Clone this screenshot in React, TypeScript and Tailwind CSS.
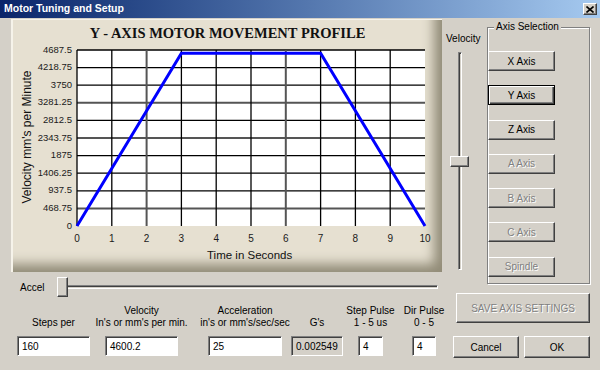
import React from "react";

const RAISED =
  "bg-[#d4d0c8] border border-t-white border-l-white border-r-[#404040] border-b-[#404040] shadow-[inset_-1px_-1px_#808080]";
const SUNKEN =
  "border border-t-[#808080] border-l-[#808080] border-r-white border-b-white shadow-[inset_1px_1px_#404040]";

const yLabels = [
  "0",
  "468.75",
  "937.5",
  "1406.25",
  "1875",
  "2343.75",
  "2812.5",
  "3281.25",
  "3750",
  "4218.75",
  "4687.5",
];

// plot box inside the svg
const PX = 64;
const PY = 2;
const PW = 348;
const PH = 176;

function Chart() {
  const col = PW / 10;
  const row = PH / 10;
  const top = PY + PH - (PH * 4600.2) / 4687.5;
  const grayRows = [1, 5, 7];
  const grayCols = [2, 6];
  return (
    <svg width={431} height={223} className="block overflow-visible">
      <rect x={PX} y={PY} width={PW} height={PH} fill="#ffffff" />
      {Array.from({ length: 10 }, (_, i) => i + 1).map((i) => {
        const y = PY + PH - row * i;
        const gray = grayRows.includes(i);
        return (
          <line
            key={"h" + i}
            x1={PX}
            x2={PX + PW}
            y1={y}
            y2={y}
            stroke={gray ? "#555" : "#000"}
            strokeWidth={gray ? 2 : 1.3}
          />
        );
      })}
      {Array.from({ length: 10 }, (_, i) => i).map((i) => {
        const x = PX + col * i;
        const gray = grayCols.includes(i);
        return (
          <line
            key={"v" + i}
            x1={x}
            x2={x}
            y1={PY}
            y2={PY + PH}
            stroke={gray ? "#555" : "#000"}
            strokeWidth={gray ? 2 : 1.3}
          />
        );
      })}
      <polyline
        points={`${PX},${PY + PH} ${PX + col * 3},${top} ${PX + col * 7},${top} ${PX + PW},${PY + PH}`}
        fill="none"
        stroke="#0000ff"
        strokeWidth={3}
      />
      {yLabels.map((l, i) => (
        <text
          key={l}
          x={59}
          y={PY + PH - row * i}
          textAnchor="end"
          dominantBaseline="middle"
          fontSize={9.5}
          fill="#1a1a1a"
        >
          {l}
        </text>
      ))}
      {Array.from({ length: 11 }, (_, i) => i).map((i) => (
        <text
          key={"x" + i}
          x={PX + col * i}
          y={191}
          textAnchor="middle"
          dominantBaseline="middle"
          fontSize={10}
          fill="#1a1a1a"
        >
          {i}
        </text>
      ))}
      <text x={194} y={208} dominantBaseline="middle" fontSize={11.5} fill="#111">
        Time in Seconds
      </text>
      <text
        x={15}
        y={89}
        textAnchor="middle"
        dominantBaseline="middle"
        fontSize={12}
        fill="#111"
        transform="rotate(-90 15 89)"
      >
        Velocity mm's per Minute
      </text>
    </svg>
  );
}

function Button({
  label,
  disabled,
  focused,
  className = "",
}: {
  label: string;
  disabled?: boolean;
  focused?: boolean;
  className?: string;
}) {
  const frame = focused
    ? "bg-[#d4d0c8] border border-black shadow-[inset_1px_1px_white,inset_-1px_-1px_#404040,inset_-2px_-2px_#808080]"
    : RAISED;
  return (
    <div
      className={`${frame} flex items-center justify-center text-[10px] ${
        disabled ? "text-[#808080] [text-shadow:1px_1px_0_#fff]" : "text-black"
      } ${className}`}
    >
      {label}
    </div>
  );
}

function Field({
  label,
  value,
  width,
  ml,
  disabled,
}: {
  label: string[];
  value: string;
  width: string;
  ml: string;
  disabled?: boolean;
}) {
  return (
    <div className={`flex flex-col items-center ${width} ${ml}`}>
      <div className="h-[24px] flex flex-col justify-end items-center text-[10px] leading-[12px] whitespace-nowrap text-black">
        {label.map((l) => (
          <span key={l}>{l}</span>
        ))}
      </div>
      <div
        className={`${SUNKEN} mt-[7px] h-[20px] w-full flex items-center pl-[4px] text-[10px] whitespace-nowrap ${
          disabled ? "bg-[#d4d0c8]" : "bg-white"
        }`}
      >
        {value}
      </div>
    </div>
  );
}

export default function App() {
  return (
    <div className="w-[600px] h-[370px] bg-[#d4d0c8] flex flex-col overflow-hidden font-['Liberation_Sans',Arial,sans-serif]">
      {/* Title bar */}
      <div className="h-[18px] flex items-center justify-between pl-[4px] pr-[3px] bg-linear-to-r from-[#0a246a] to-[#a6caf0]">
        <span className="text-white font-bold text-[10.5px]">Motor Tuning and Setup</span>
        <div className={`${RAISED} w-[14px] h-[12px] flex items-center justify-center`}>
          <svg width="8" height="7" viewBox="0 0 8 7">
            <path d="M0.5 0.5 L7.5 6.5 M7.5 0.5 L0.5 6.5" stroke="#000" strokeWidth="1.6" />
          </svg>
        </div>
      </div>

      <div className="flex flex-1">
        {/* Left column */}
        <div className="w-[443px] flex flex-col">
          <div className="mt-[1px] ml-[11px] w-[431px] h-[253px] bg-[#e6e0d1] border-l-2 border-t border-[#f6f3ea] shadow-[inset_-16px_-16px_12px_-8px_#928c78] flex flex-col">
            <div className="h-[28px] flex items-center justify-center font-['Liberation_Serif','Times_New_Roman',serif] font-bold text-[14.5px] text-[#111]">
              Y - AXIS MOTOR MOVEMENT PROFILE
            </div>
            <Chart />
          </div>

          {/* Accel slider */}
          <div className="mt-[5px] h-[20px] flex items-center">
            <span className="ml-[20px] w-[37px] text-[10px]">Accel</span>
            <div className="relative w-[381px] h-[20px] flex items-center">
              <div className={`${SUNKEN} w-full h-[4px] bg-[#d4d0c8]`} />
              <div className={`${RAISED} absolute left-0 top-0 w-[11px] h-[20px]`} />
            </div>
          </div>

          {/* Fields */}
          <div className="mt-[8px] flex">
            <Field label={["Steps per"]} value="160" width="w-[73px]" ml="ml-[17px]" />
            <Field
              label={["Velocity", "In's or mm's per min."]}
              value="4600.2"
              width="w-[73px]"
              ml="ml-[15px]"
            />
            <Field
              label={["Acceleration", "in's or mm's/sec/sec"]}
              value="25"
              width="w-[74px]"
              ml="ml-[30px]"
            />
            <Field label={["G's"]} value="0.002549" width="w-[52px]" ml="ml-[9px]" disabled />
            <Field label={["Step Pulse", "1 - 5 us"]} value="4" width="w-[25px]" ml="ml-[15px]" />
            <Field label={["Dir Pulse", "0 - 5"]} value="4" width="w-[24px]" ml="ml-[29px]" />
          </div>
        </div>

        {/* Right column */}
        <div className="flex-1 flex flex-col">
          <div className="flex">
            <div className="w-[44px] flex flex-col">
              <span className="mt-[15px] pl-[3px] text-[10px] leading-[12px]">Velocity</span>
              <div className="relative mt-[7px] h-[218px]">
                <div className={`${SUNKEN} ml-[15px] w-[4px] h-full bg-[#d4d0c8]`} />
                <div className={`${RAISED} absolute left-[7px] top-[104px] w-[19px] h-[11px]`} />
              </div>
            </div>
            <div className="relative mt-[9px] w-[103px] h-[257px] border border-[#808080] shadow-[inset_1px_1px_white,1px_1px_white]">
              <span className="absolute -top-[7px] left-[6px] px-[2px] bg-[#d4d0c8] text-[10px] leading-[12px]">
                Axis Selection
              </span>
              <div className="pt-[23px] flex flex-col gap-[14.3px]">
                <Button label="X Axis" className="w-[67px] h-[20px]" />
                <Button label="Y Axis" focused className="w-[67px] h-[20px]" />
                <Button label="Z Axis" className="w-[67px] h-[20px]" />
                <Button label="A Axis" disabled className="w-[67px] h-[20px]" />
                <Button label="B Axis" disabled className="w-[67px] h-[20px]" />
                <Button label="C Axis" disabled className="w-[67px] h-[20px]" />
                <Button label="Spindle" disabled className="w-[67px] h-[20px]" />
              </div>
            </div>
          </div>
          <Button
            label="SAVE AXIS SETTINGS"
            disabled
            className="mt-[9px] ml-[13px] w-[134px] h-[30px]"
          />
          <div className="mt-[13px] ml-[10px] flex gap-[5px]">
            <Button label="Cancel" className="w-[66px] h-[22px]" />
            <Button label="OK" className="w-[66px] h-[22px]" />
          </div>
        </div>
      </div>
    </div>
  );
}
